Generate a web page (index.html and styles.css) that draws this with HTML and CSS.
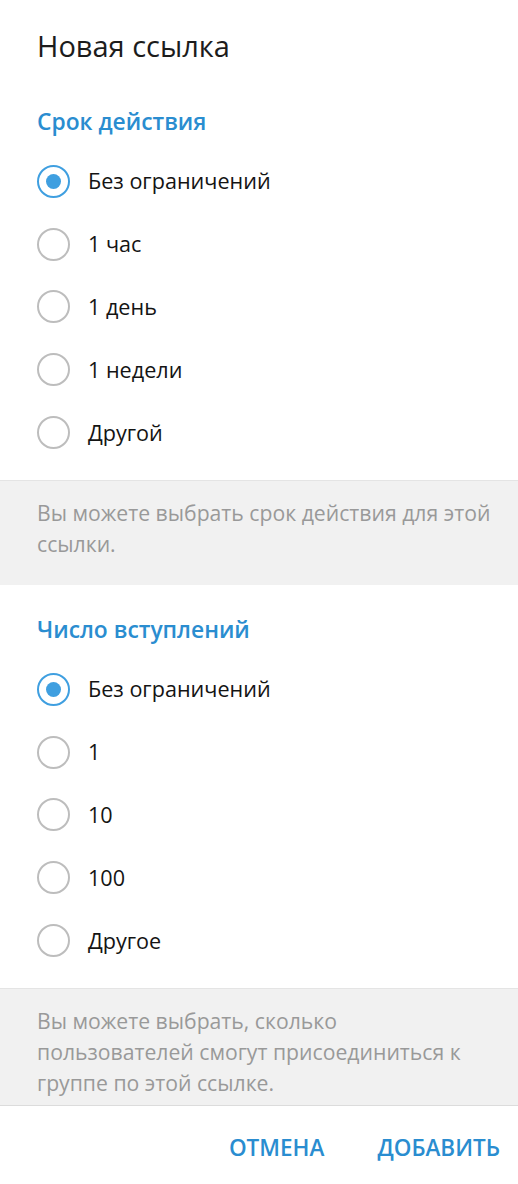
FILE: index.html
```html
<!DOCTYPE html>
<html lang="ru">
<head>
<meta charset="utf-8">
<title>Новая ссылка</title>
<link rel="stylesheet" href="styles.css">
</head>
<body>
<div class="dialog">
  <h1 class="title">Новая ссылка</h1>

  <h2 class="section-header">Срок действия</h2>
  <ul class="options">
    <li class="option checked"><span class="radio"></span><span class="label">Без ограничений</span></li>
    <li class="option"><span class="radio"></span><span class="label">1 час</span></li>
    <li class="option"><span class="radio"></span><span class="label">1 день</span></li>
    <li class="option"><span class="radio"></span><span class="label">1 недели</span></li>
    <li class="option"><span class="radio"></span><span class="label">Другой</span></li>
  </ul>
  <div class="note note-first">
    <p>Вы можете выбрать срок действия для этой<br>ссылки.</p>
  </div>

  <h2 class="section-header section-second">Число вступлений</h2>
  <ul class="options">
    <li class="option checked"><span class="radio"></span><span class="label">Без ограничений</span></li>
    <li class="option"><span class="radio"></span><span class="label">1</span></li>
    <li class="option"><span class="radio"></span><span class="label">10</span></li>
    <li class="option"><span class="radio"></span><span class="label">100</span></li>
    <li class="option"><span class="radio"></span><span class="label">Другое</span></li>
  </ul>
  <div class="note note-last">
    <p>Вы можете выбрать, сколько<br>пользователей смогут присоединиться к<br>группе по этой ссылке.</p>
  </div>

  <div class="buttons">
    <button class="btn">Отмена</button>
    <button class="btn">Добавить</button>
  </div>
</div>
</body>
</html>
```
FILE: styles.css
```css
html, body {
  margin: 0;
  padding: 0;
  background: #ffffff;
}

body {
  font-family: "Open Sans", "Noto Sans", sans-serif;
  color: #1a1a1a;
  width: 518px;
}

.dialog {
  display: flex;
  flex-direction: column;
}

.title {
  margin: 0;
  padding: 31px 37px 0;
  font-size: 29px;
  line-height: 30px;
  font-weight: 400;
  color: #1c1c1c;
}

.section-header {
  margin: 46px 0 0;
  padding: 0 37px;
  font-size: 22.8px;
  line-height: 30px;
  font-weight: 600;
  color: #2a8dd0;
}

.section-second {
  margin-top: 30px;
}

.options {
  list-style: none;
  margin: 0;
  padding: 13px 0 16px;
}

.option {
  height: 62.8px;
  display: flex;
  align-items: center;
  padding-left: 37px;
}

.radio {
  box-sizing: border-box;
  width: 33px;
  height: 33px;
  border-radius: 50%;
  border: 2.5px solid #bdbdbd;
  display: flex;
  align-items: center;
  justify-content: center;
  flex-shrink: 0;
}

.option.checked .radio {
  border-color: #3f9fe0;
}

.option.checked .radio::after {
  content: "";
  width: 15px;
  height: 15px;
  border-radius: 50%;
  background: #3f9fe0;
}

.label {
  margin-left: 18px;
  font-size: 21.6px;
  line-height: 30px;
  color: #141414;
}

.note {
  background: #f1f1f1;
  border-top: 1px solid #e4e4e4;
  padding: 16px 20px 26px 37px;
}

.note p {
  margin: 0;
  font-size: 21.2px;
  line-height: 31px;
  color: #999999;
  white-space: nowrap;
}

.note-last {
  padding-bottom: 7px;
  border-bottom: 1px solid #dcdcdc;
}

.buttons {
  display: flex;
  justify-content: flex-end;
  gap: 53px;
  padding: 27px 18px 0;
}

.btn {
  border: none;
  background: none;
  padding: 0;
  font-family: "Open Sans", "Noto Sans", sans-serif;
  font-size: 22.5px;
  line-height: 30px;
  font-weight: 600;
  text-transform: uppercase;
  color: #2a8dd0;
}
```
